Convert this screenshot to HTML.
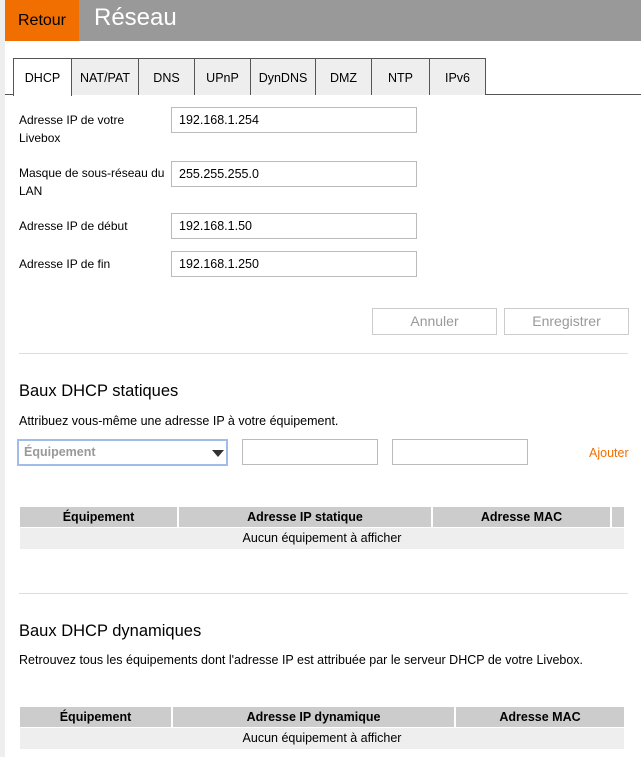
<!DOCTYPE html>
<html><head><meta charset="utf-8"><style>
*{box-sizing:border-box;margin:0;padding:0}
body{width:641px;height:757px;overflow:hidden;background:#fff;font-family:"Liberation Sans",Arial,sans-serif;font-size:12px;color:#000;position:relative}
.a{position:absolute}
.strip{left:0;top:0;width:5px;height:757px;background:#eee}
.hdr{left:5px;top:0;width:636px;height:41px;background:#999}
.ret{left:5px;top:0;width:74px;height:41px;background:#f16e00;font-size:16px;line-height:41px;text-align:center}
.ttl{left:94px;top:4px;font-size:24px;color:#fff}
.tab{top:58px;height:37px;border:1px solid #555;border-bottom:none;background:#eee;text-align:center;line-height:38px;font-size:12.5px}
.tab.on{background:#fff;height:38px}
.tline{left:5px;top:94px;width:636px;height:1px;background:#555}
.lbl{left:19px;line-height:18px;font-size:12px}
.in{border:1px solid #bbb;background:#fff;height:26px;padding-left:7px;line-height:24px;font-size:12.5px}
.btn{border:1px solid #ccc;height:27px;text-align:center;line-height:25px;color:#999;font-size:14px}
.sep{left:19px;width:609px;height:1px;background:#ddd}
h2{position:absolute;left:19px;font-weight:normal;font-size:16.5px}
.th{background:#ccc;font-weight:bold;text-align:center;height:20px;line-height:20px;font-size:12.5px}
.tr{background:#eee;text-align:center;height:21px;line-height:21px;font-size:12.5px}
</style></head><body>
<div class="a strip"></div>
<div class="a hdr"></div>
<div class="a ret">Retour</div>
<div class="a ttl">Réseau</div>
<div class="a tline"></div>
<div class="a tab on" style="left:13px;width:59px">DHCP</div>
<div class="a tab" style="left:71px;width:68px">NAT/PAT</div>
<div class="a tab" style="left:138px;width:57px">DNS</div>
<div class="a tab" style="left:194px;width:57px">UPnP</div>
<div class="a tab" style="left:250px;width:66px">DynDNS</div>
<div class="a tab" style="left:315px;width:57px">DMZ</div>
<div class="a tab" style="left:371px;width:59px">NTP</div>
<div class="a tab" style="left:429px;width:57px">IPv6</div>

<div class="a lbl" style="top:111px">Adresse IP de votre<br>Livebox</div>
<div class="a in" style="left:171px;top:107px;width:246px">192.168.1.254</div>
<div class="a lbl" style="top:164px">Masque de sous-réseau du<br>LAN</div>
<div class="a in" style="left:171px;top:161px;width:246px">255.255.255.0</div>
<div class="a lbl" style="top:217px">Adresse IP de début</div>
<div class="a in" style="left:171px;top:213px;width:246px">192.168.1.50</div>
<div class="a lbl" style="top:255px">Adresse IP de fin</div>
<div class="a in" style="left:171px;top:251px;width:246px">192.168.1.250</div>

<div class="a btn" style="left:372px;top:308px;width:125px">Annuler</div>
<div class="a btn" style="left:504px;top:308px;width:125px">Enregistrer</div>
<div class="a sep" style="top:353px"></div>

<h2 style="top:382px">Baux DHCP statiques</h2>
<div class="a" style="left:19px;top:414px;font-size:12.5px">Attribuez vous-même une adresse IP à votre équipement.</div>
<div class="a in" style="left:17px;top:439px;width:211px;height:27px;border:2px solid #9fbde8;color:#999;font-weight:bold;line-height:23px;padding-left:5px">Équipement</div>
<div class="a" style="left:212px;top:450px;width:0;height:0;border-left:6px solid transparent;border-right:6px solid transparent;border-top:7px solid #333"></div>
<div class="a in" style="left:242px;top:439px;width:136px"></div>
<div class="a in" style="left:392px;top:439px;width:136px"></div>
<div class="a" style="left:589px;top:446px;color:#f16e00;font-size:12.5px">Ajouter</div>

<div class="a th" style="left:20px;top:507px;width:157px">Équipement</div>
<div class="a th" style="left:179px;top:507px;width:252px">Adresse IP statique</div>
<div class="a th" style="left:433px;top:507px;width:177px">Adresse MAC</div>
<div class="a th" style="left:612px;top:507px;width:12px"></div>
<div class="a tr" style="left:20px;top:528px;width:604px">Aucun équipement à afficher</div>

<div class="a sep" style="top:593px"></div>
<h2 style="top:622px">Baux DHCP dynamiques</h2>
<div class="a" style="left:19px;top:653px;font-size:12.5px">Retrouvez tous les équipements dont l'adresse IP est attribuée par le serveur DHCP de votre Livebox.</div>

<div class="a th" style="left:20px;top:707px;width:151px">Équipement</div>
<div class="a th" style="left:173px;top:707px;width:281px">Adresse IP dynamique</div>
<div class="a th" style="left:456px;top:707px;width:168px">Adresse MAC</div>
<div class="a tr" style="left:20px;top:728px;width:604px">Aucun équipement à afficher</div>
</body></html>
